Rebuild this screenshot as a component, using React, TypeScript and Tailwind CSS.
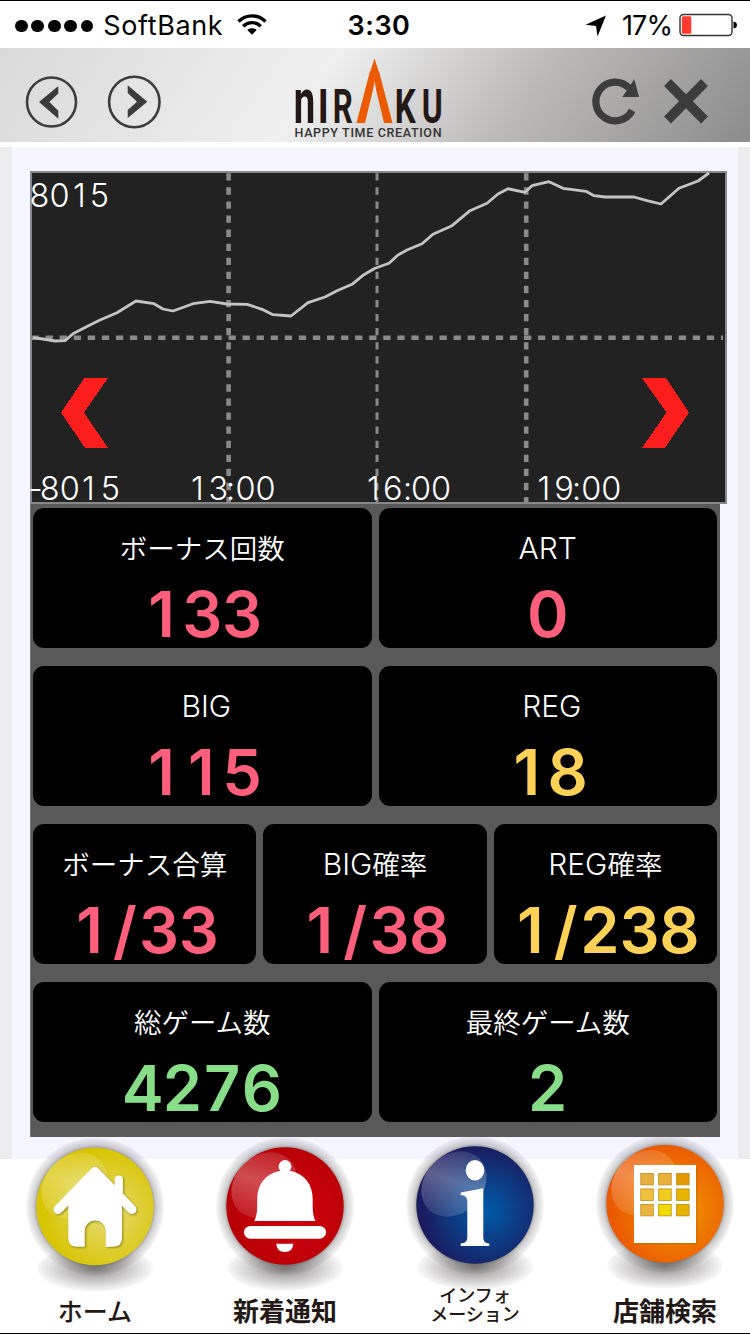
import type { ReactNode } from "react";
import clsx from "clsx";

type Tone = "pink" | "yellow" | "green";

interface Stat {
    latin?: string;
    label?: string;
    value: string;
    tone: Tone;
    indent?: boolean;
}

const toneClass: Record<Tone, string> = {
    pink: "text-[#ff5f7a]",
    yellow: "text-[#ffd257]",
    green: "text-[#88dd88]",
};

const rows: Stat[][] = [
    [
        { label: "ボーナス回数", value: "133", tone: "pink" },
        { latin: "ART", value: "0", tone: "pink" },
    ],
    [
        { latin: "BIG", value: "115", tone: "pink", indent: true },
        { latin: "REG", value: "18", tone: "yellow", indent: true },
    ],
    [
        { label: "ボーナス合算", value: "1/33", tone: "pink" },
        { latin: "BIG", label: "確率", value: "1/38", tone: "pink" },
        { latin: "REG", label: "確率", value: "1/238", tone: "yellow" },
    ],
    [
        { label: "総ゲーム数", value: "4276", tone: "green" },
        { label: "最終ゲーム数", value: "2", tone: "green" },
    ],
];

const chartLine =
    "33,337.7 43,339 55,341 65,340.7 73,333.7 88,326 100,320 117,312.7 136,301 154,303.7 163,309 173,311 193,303.7 210,301.3 227,304 247,304.3 262,309.3 273,314.7 291,316 308,302.7 325,297 337,290.7 352,284.3 363,275.3 375,268.3 389,263.3 398,255 407,250 422,243.7 433,234.3 452,225.7 470,210.7 487,203.3 498,194 508,188.7 525,192.3 532,185.7 549,181.7 563,188.3 586,191.3 594,195.7 605,197 634,197 647,200.7 661,204 679,188.3 698,181 709,173";

const axisLabels = [
    { text: "8015", x: "29.5 49.5 73 89.7", y: 206.5 },
    { text: "-8015", x: "28 39.7 59.7 82 100.7", y: 499.5 },
    { text: "13:00", x: "191 208.5 226 235.500 255.600", y: 499.5 },
    { text: "16:00", x: "367 383 403 411 431", y: 499.5 },
    { text: "19:00", x: "537.5 554.3 572 581.200 601.300", y: 499.5 },
];

function StatusBar() {
    return (
        <div className="flex h-12 items-center border-t border-black bg-white pt-[3px] pl-[15px] pr-[13px] font-['Inter',sans-serif] text-[27px] text-black">
            <div className="flex flex-1 items-center">
                <div className="flex gap-[3.6px]">
                    {[0, 1, 2, 3, 4].map((i) => (
                        <span key={i} className="size-[12.8px] rounded-full bg-black" />
                    ))}
                </div>
                <span className="ml-[10px] tracking-[0.6px]">SoftBank</span>
                <svg className="ml-3.5 -mt-0.5 h-[22px] w-[30px]" viewBox="0 0 30 22" fill="none" stroke="#000" strokeWidth="3.4">
                    <path d="M1.5 7.5C9 0 21 0 28.500 7.500" />
                    <path d="M6.200 12.300C11.300 7.400 18.700 7.400 23.800 12.300" />
                    <path d="M10.300 16C13 13.600 17 13.600 19.700 16L15 20.800Z" fill="#000" stroke="none" />
                </svg>
            </div>
            <span className="ml-1.5 font-semibold tracking-[0.5px]">3:30</span>
            <div className="flex flex-1 items-center justify-end">
                <svg className="mr-[15px] h-[22px] w-[22px]" viewBox="0 0 22 22">
                    <path d="M21 0.500L0.500 9.800L11 11L12.500 21.500Z" />
                </svg>
                <span className="tracking-[-0.9px]">17%</span>
                <svg className="ml-[7px] -mt-0.5 h-6 w-[58px]" viewBox="0 0 58 24">
                    <rect x="1" y="1.500" width="52" height="21" rx="3.500" fill="none" stroke="#333" strokeWidth="1.400" />
                    <rect x="2.800" y="3.300" width="9.500" height="17.400" rx="1.500" fill="#ff3b30" />
                    <path d="M54.500 8.500Q58 9 58 12T54.500 15.500Z" />
                </svg>
            </div>
        </div>
    );
}

function Logo() {
    const letters = [
        { ch: "n", x: 293.8, width: 21.5, scale: 1.33 },
        { ch: "I", x: 317.8, width: 11, scale: 1 },
        { ch: "R", x: 332.8, width: 20, scale: 1 },
        { ch: "K", x: 394.8, width: 21, scale: 1 },
        { ch: "U", x: 421.8, width: 21, scale: 1 },
    ];
    return (
        <svg className="ml-[127px] h-[94px] w-[156px]" viewBox="290 48 156 94" fontFamily="Roboto, sans-serif">
            {letters.map((l) => (
                <text
                    key={l.ch}
                    transform={`translate(${l.x} 123) scale(1 ${l.scale})`}
                    fontSize="48"
                    fontWeight="700"
                    fill="#231815"
                    textLength={l.width}
                    lengthAdjust="spacingAndGlyphs"
                >
                    {l.ch}
                </text>
            ))}
            <text
                transform="translate(356.500 123) scale(1 1.270)"
                fontSize="56"
                fontFamily="'Open Sans', sans-serif"
                fontWeight="700"
                fill="#eb5a00"
                textLength="36"
                lengthAdjust="spacingAndGlyphs"
            >
                Λ
            </text>
            <path d="M369.500 74L374.500 58.500L379.500 74Z" fill="#eb5a00" />
            <text x="294.500" y="137.200" fontSize="12.500" fontWeight="500" fill="#333" textLength="147">
                HAPPY TIME CREATION
            </text>
        </svg>
    );
}

function Header() {
    return (
        <header className="flex h-[94px] bg-[linear-gradient(125deg,#d9d9d9_0%,#efefef_42%,#bdbbba_68%,#8c8c8c_100%)] pl-[25px] pr-10">
            <svg className="h-[94px] w-[138px]" viewBox="25 48 138 94" fill="none" stroke="#3c3c3c" strokeWidth="2.600">
                <circle cx="51.500" cy="102" r="24.500" />
                <circle cx="134.300" cy="102" r="25.200" />
                <path d="M58.300 86V93.500L49.300 102L58.300 110.700V118.700L39 102Z" fill="#3c3c3c" stroke="none" />
                <path d="M127.700 85.300L147.300 101.700L127.700 118V110L137 101.700L127.700 93Z" fill="#3c3c3c" stroke="none" />
            </svg>
            <Logo />
            <svg className="ml-auto h-[94px] w-[120px]" viewBox="590 48 120 94" fill="none" stroke="#3c3c3c">
                <path d="M632.200 110.500A19.300 19.300 0 1 1 629 88" strokeWidth="7.200" />
                <path d="M634.300 79.300L639 97H622.300Z" fill="#3c3c3c" stroke="none" />
                <path d="M667.500 82.500L704.500 120M704.500 82.500L667.500 120" strokeWidth="9.700" />
            </svg>
        </header>
    );
}

function SlumpChart() {
    return (
        <svg className="block h-[333px] w-[697px] overflow-visible" viewBox="30 171 697 333">
            <rect x="31" y="172" width="695" height="331" fill="#222" stroke="#888" strokeWidth="2" />
            <g stroke="#8a8a8a" strokeDasharray="7.300 6.770">
                <path d="M228.600 173.300V502" strokeWidth="4.600" />
                <path d="M377 173.300V502" strokeWidth="3" />
                <path d="M526.200 173.300V502" strokeWidth="4.600" />
                <path d="M31.500 337.800H723" strokeWidth="4.600" />
            </g>
            <polyline points={chartLine} fill="none" stroke="#c4c4c4" strokeWidth="2.800" strokeLinejoin="round" />
            <g fill="#fff" fontFamily="Inter, sans-serif" fontSize="32.500" fontWeight="300">
                {axisLabels.map((l) => (
                    <text key={l.text} x={l.x} y={l.y}>
                        {l.text}
                    </text>
                ))}
            </g>
            <g fill="#ff1e1e" shapeRendering="crispEdges">
                <path d="M84.500 378H108L84 412.500L108 448H85L61 412.500Z" />
                <path d="M642 378H666L689 412.500L665 448H642L666.500 412.500Z" />
            </g>
        </svg>
    );
}

function StatCard({ latin, label, value, tone, indent }: Stat) {
    return (
        <div className="flex h-[140px] flex-1 flex-col items-center rounded-[11px] bg-black pt-5">
            <div className={clsx("flex h-10 items-center text-white", indent && "pl-2")}>
                {latin && <span className="font-['Inter',sans-serif] text-[30px] font-light">{latin}</span>}
                {label && <span className="font-['Noto_Sans_CJK_JP',sans-serif] text-[27.5px] font-[350]">{label}</span>}
            </div>
            <div
                className={clsx(
                    "mt-[13px] flex font-['Inter',sans-serif] text-[63px] leading-[66px] font-[560]",
                    toneClass[tone],
                )}
            >
                {value.split("").map((ch, i) => (
                    <span
                        key={i}
                        className={clsx(
                            "flex justify-center",
                            ch === "/" ? "w-[29px]" : "w-[39.700px]",
                            ch === "1" && "pr-0.5",
                        )}
                    >
                        {ch}
                    </span>
                ))}
            </div>
        </div>
    );
}

interface NavItemProps {
    id: string;
    cy: number;
    inner: string;
    outer: string;
    label: ReactNode;
    labelClass: string;
    children: ReactNode;
}

function NavItem({ id, cy, inner, outer, label, labelClass, children }: NavItemProps) {
    return (
        <a href="#" className="flex w-[140px] flex-col items-center">
            <svg className="h-[155px] w-[140px] shrink-0" viewBox="0 0 140 155">
                <defs>
                    <radialGradient id={`${id}-ball`} cx="0.600" cy="0.550" r="0.550">
                        <stop offset="0" stopColor={inner} />
                        <stop offset="1" stopColor={outer} />
                    </radialGradient>
                    <radialGradient id={`${id}-halo`}>
                        <stop offset="0.800" stopColor="#3e3a39" stopOpacity="0.700" />
                        <stop offset="0.890" stopColor="#3e3a39" stopOpacity="0.240" />
                        <stop offset="1" stopColor="#3e3a39" stopOpacity="0.040" />
                    </radialGradient>
                    <radialGradient id={`${id}-floor`}>
                        <stop offset="0" stopColor="#3e3a39" stopOpacity="0.600" />
                        <stop offset="0.550" stopColor="#3e3a39" stopOpacity="0.280" />
                        <stop offset="1" stopColor="#3e3a39" stopOpacity="0.030" />
                    </radialGradient>
                    <linearGradient id={`${id}-gloss`} x1="0" y1="0.600" x2="1" y2="0.200">
                        <stop offset="0" stopColor="#fff" stopOpacity="0.120" />
                        <stop offset="0.500" stopColor="#fff" stopOpacity="0.300" />
                        <stop offset="1" stopColor="#fff" stopOpacity="0.100" />
                    </linearGradient>
                </defs>
                <ellipse cx="70" cy={cy + 62} rx="58" ry="23" fill={`url(#${id}-floor)`} />
                <circle cx="70" cy={cy} r="69" fill={`url(#${id}-halo)`} />
                <circle cx="70" cy={cy} r="58.700" fill={`url(#${id}-ball)`} />
                <ellipse
                    cx="49"
                    cy={cy - 21}
                    rx="36"
                    ry="29"
                    transform={`rotate(-45 49 ${cy - 21})`}
                    fill={`url(#${id}-gloss)`}
                />
                {children}
            </svg>
            <div className={clsx("text-center whitespace-nowrap text-[#231815]", labelClass)}>{label}</div>
        </a>
    );
}

function BottomNav() {
    const windows = [
        ["#e5b040", "#e8b23c", "#e09a00"],
        ["#f0bf3c", "#f0cc1e", "#e8b400"],
        ["#ecb440", "#f0dc00", "#e6b400"],
    ];
    return (
        <nav className="relative -mt-[22px] flex h-[197px] gap-[50px] border-b border-black pl-[25px] font-['Noto_Sans_CJK_JP',sans-serif]">
            <NavItem id="home" cy={69.5} inner="#e6dc78" outer="#d8c400" label="ホーム" labelClass="text-[25px] leading-[37px] font-medium">
                <g fill="#fff" className="drop-shadow-[1px_1px_1px_rgba(90,80,0,0.6)]">
                    <path d="M89.700 60V42.500a4.100 4.100 0 0 1 8.200 0V60Z" />
                    <path d="M70 36L97 61V101q0 8.700-9 8.700H80.700V94a10.500 10.500 0 0 0-21 0v15.700H52q-8.700 0-8.700-8.700V61Z" />
                    <path d="M33 72.500L70 34.500L107 72.500" fill="none" stroke="#fff" strokeWidth="9" strokeLinecap="round" strokeLinejoin="round" />
                </g>
            </NavItem>
            <NavItem id="news" cy={69} inner="#cf000c" outer="#b80007" label="新着通知" labelClass="text-[26px] leading-[36px] font-bold">
                <g fill="#fff">
                    <circle cx="70" cy="29.500" r="6.400" />
                    <path d="M64 34C50 37 42.200 48 42.200 62V70C42.200 76 41 80 39.300 84H100.300C98.700 80 97.700 76 97.700 70V62C97.700 48 90 37 76 34Z" />
                    <rect x="29" y="89" width="82" height="12.700" rx="6.350" />
                    <path d="M61.300 106.700H78.300Q78 115 69.800 115T61.300 106.700Z" />
                </g>
            </NavItem>
            <NavItem
                id="info"
                cy={68}
                inner="#005ba8"
                outer="#1a1c60"
                label={
                    <>
                        インフォ
                        <br />
                        メーション
                    </>
                }
                labelClass="-mt-[7px] text-[18px] leading-[19px] font-medium"
            >
                <g fill="#fff">
                    <ellipse cx="70" cy="33.300" rx="9.300" ry="10.300" />
                    <path d="M55.700 55.500L78.300 51.300V101Q78.300 106 84.300 106.500V109H55.700V106.500Q62 106 62.300 101V64Q62 58 55.700 58Z" />
                </g>
            </NavItem>
            <NavItem id="shop" cy={66.7} inner="#f29a00" outer="#eb5a00" label="店舗検索" labelClass="text-[26px] leading-[35px] font-bold">
                <rect x="40.500" y="29.500" width="62" height="78" fill="#b86a00" opacity="0.500" />
                <rect x="39" y="28" width="62" height="78" fill="#fff" />
                {windows.map((line, r) =>
                    line.map((color, c) => (
                        <rect
                            key={`${r}-${c}`}
                            x={45.8 + c * 17.9}
                            y={36.4 + r * 15.5}
                            width="12.500"
                            height="11.500"
                            fill={color}
                            stroke="#c08a10"
                            strokeWidth="0.800"
                        />
                    )),
                )}
            </NavItem>
        </nav>
    );
}

export default function App() {
    return (
        <div className="h-[1334px] w-[750px] overflow-hidden bg-white">
            <StatusBar />
            <Header />
            <main className="mt-[5px] h-[1012px] border-x-[12px] border-[#ececee] bg-[#f5f5ff] pl-[18px] pt-6">
                <SlumpChart />
                <div className="flex w-[690px] flex-col gap-[18px] border-l border-[#777] bg-[#595959] pt-1 pr-[3px] pb-[15px] pl-0.5">
                    {rows.map((row, i) => (
                        <div key={i} className="flex gap-[7px]">
                            {row.map((stat) => (
                                <StatCard key={stat.value} {...stat} />
                            ))}
                        </div>
                    ))}
                </div>
            </main>
            <BottomNav />
        </div>
    );
}
